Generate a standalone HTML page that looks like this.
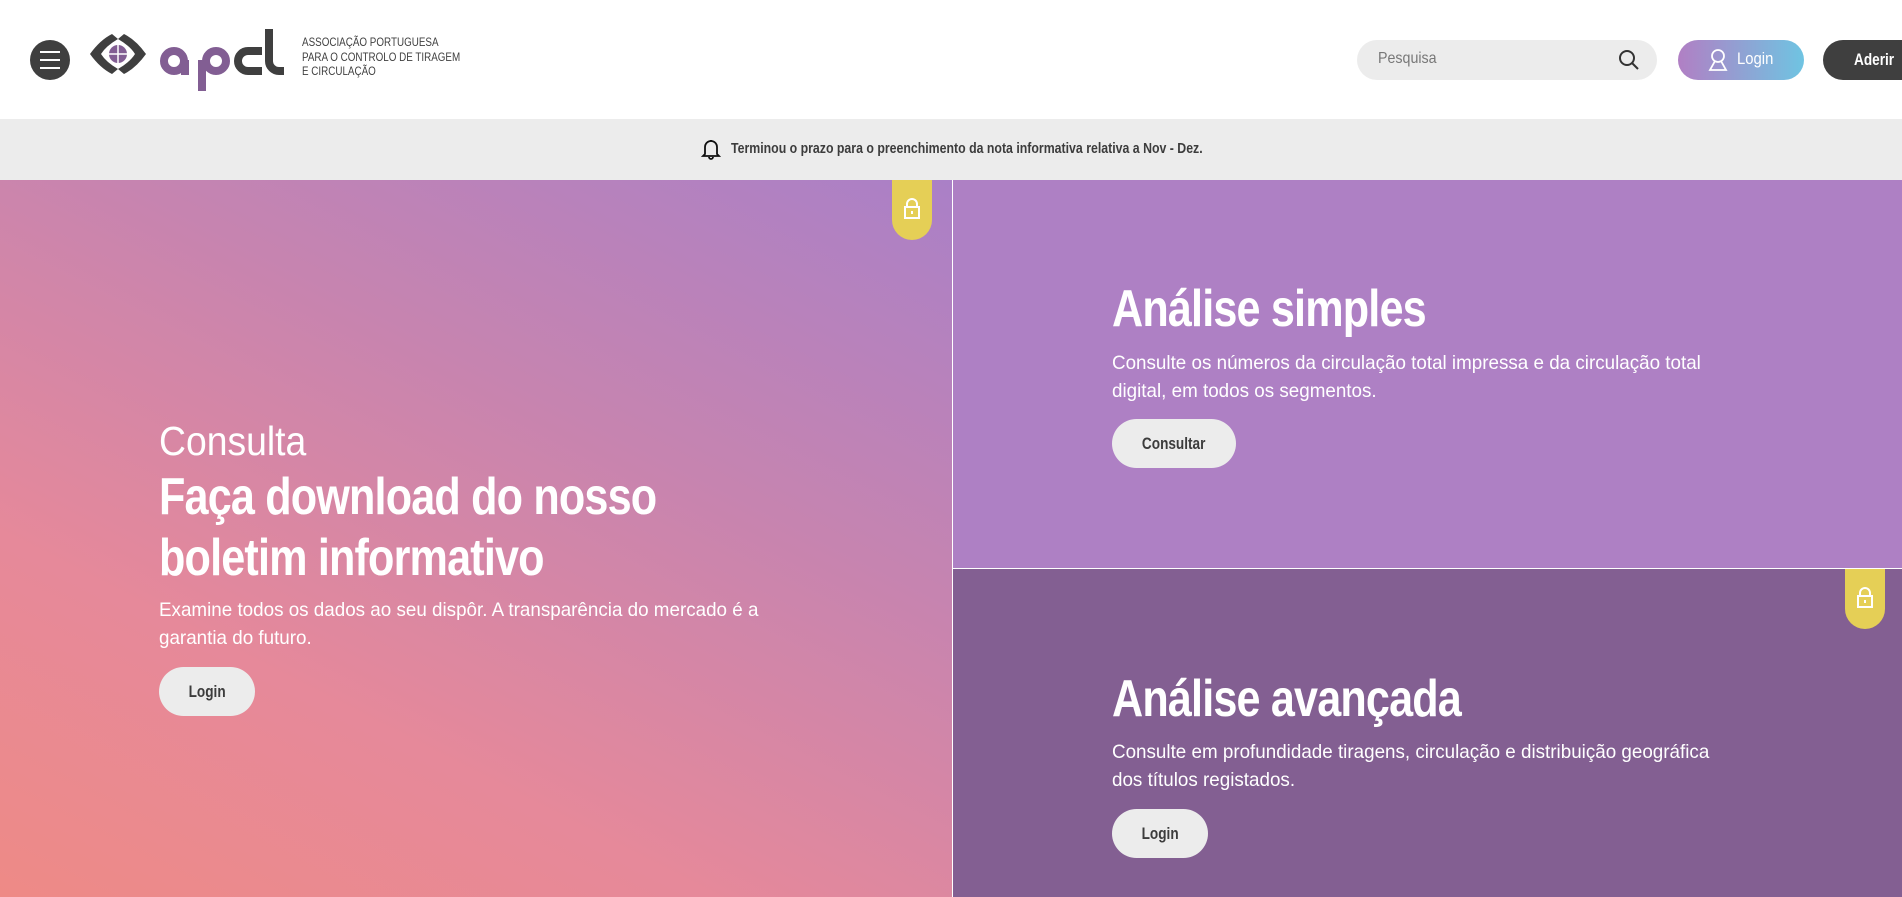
<!DOCTYPE html>
<html><head><meta charset="utf-8"><style>
*{margin:0;padding:0;box-sizing:border-box}
body{width:1902px;height:897px;overflow:hidden;font-family:"Liberation Sans",sans-serif;background:#fff;position:relative}
.abs{position:absolute;white-space:nowrap;transform-origin:0 0}
.btn{position:absolute;background:#ececec;color:#3c3c3c;border-radius:25px;font-weight:bold;font-size:17px;display:flex;align-items:center;justify-content:center}
.btn span{display:inline-block;transform:scaleX(0.8)}
.h1{color:#fff;font-weight:bold;font-size:52px;letter-spacing:-1px;line-height:61px;transform:scaleX(0.83)}
.p{color:#fff;font-size:19.5px;line-height:28px;transform:scaleX(0.965)}
.tab{position:absolute;width:40px;height:60px;background:#e5cf56;border-radius:0 0 20px 20px}
</style></head><body>
<!-- header -->
<div class="abs" style="left:30px;top:40px;width:40px;height:40px;border-radius:50%;background:#3f3f3f"></div>
<div class="abs" style="left:40px;top:51px;width:20px;height:2px;background:#fff;box-shadow:0 8px 0 #fff,0 16px 0 #fff"></div>
<svg class="abs" style="left:0;top:0" width="300" height="100" viewBox="0 0 300 100">
<path d="M90 54 Q100 40 112 34 L118 39 Q106 46 101 54 Q106 62 118 69 L112 74 Q100 68 90 54 Z" fill="#3f3f3f"/>
<path d="M146 54 Q136 40 124 34 L118 39 Q130 46 135 54 Q130 62 118 69 L124 74 Q136 68 146 54 Z" fill="#3f3f3f"/>
<circle cx="118" cy="54" r="9" fill="#825e93"/>
<path d="M118 45v18M109 54h18" stroke="#fff" stroke-width="1.5"/>
<g fill="none" stroke="#825e93" stroke-width="8">
<circle cx="174" cy="61" r="10"/><path d="M185 60 V75"/>
<circle cx="216" cy="61" r="10"/><path d="M202 60 V91"/>
</g>
<g fill="none" stroke="#3f3f3f" stroke-width="8">
<path d="M262 51 H248 a10 10 0 0 0 0 20 H262"/>
<path d="M269 29 V61 a10 10 0 0 0 10 10 H284"/>
</g>
</svg>
<div class="abs" style="left:302px;top:35px;font-size:12px;line-height:14.5px;color:#3f3f3f;transform:scaleX(0.82)">ASSOCIAÇÃO PORTUGUESA<br>PARA O CONTROLO DE TIRAGEM<br>E CIRCULAÇÃO</div>
<div class="abs" style="left:1357px;top:40px;width:300px;height:40px;border-radius:20px;background:#ececec"></div>
<div class="abs" style="left:1378px;top:50px;font-size:16px;color:#777;transform:scaleX(0.89)">Pesquisa</div>
<svg class="abs" style="left:1618px;top:49px" width="22" height="22" viewBox="0 0 22 22"><circle cx="9" cy="9" r="7" fill="none" stroke="#333" stroke-width="2"/><path d="M14 14l6 6" stroke="#333" stroke-width="2"/></svg>
<div class="abs" style="left:1678px;top:40px;width:126px;height:40px;border-radius:20px;background:linear-gradient(90deg,#b17fc4,#6fc4e2)"></div>
<svg class="abs" style="left:1707px;top:48px" width="22" height="24" viewBox="0 0 22 24"><circle cx="11" cy="8" r="6" fill="none" stroke="#fff" stroke-width="1.8"/><path d="M8 13 L3 22 H19 L14 13" fill="none" stroke="#fff" stroke-width="1.8"/></svg>
<div class="abs" style="left:1737px;top:50px;font-size:16.5px;color:#fff;transform:scaleX(0.9)">Login</div>
<div class="abs" style="left:1823px;top:40px;width:100px;height:40px;border-radius:20px;background:#3f3f3f"></div>
<div class="abs" style="left:1854px;top:50px;font-size:17px;font-weight:bold;color:#fff;transform:scaleX(0.8)">Aderir</div>
<!-- notice -->
<div class="abs" style="left:0;top:119px;width:1902px;height:61px;background:#ececec"></div>
<svg class="abs" style="left:701px;top:138px" width="20" height="22" viewBox="0 0 20 22"><path d="M4 16 V9 a6 6 0 0 1 12 0 V16 L18 18 H2 Z M8 19 a2 2 0 0 0 4 0" fill="none" stroke="#111" stroke-width="1.8"/><path d="M10 2v1" stroke="#111" stroke-width="2"/></svg>
<div class="abs" style="left:731px;top:141px;font-size:14.5px;color:#3c3c3c;font-weight:bold;transform:scaleX(0.85)">Terminou o prazo para o preenchimento da nota informativa relativa a Nov - Dez.</div>
<!-- panels -->
<div class="abs" style="left:0;top:180px;width:952px;height:717px;background:linear-gradient(27deg,#ee8a86 0%,#e6899a 30%,#c684b0 65%,#aa80c7 100%)"></div>
<div class="abs" style="left:953px;top:180px;width:949px;height:388px;background:#ae80c4"></div>
<div class="abs" style="left:953px;top:569px;width:949px;height:328px;background:#835f92"></div>
<div class="tab" style="left:892px;top:180px"></div>
<div class="tab" style="left:1845px;top:569px"></div>
<svg class="abs" style="left:902px;top:197px" width="20" height="24" viewBox="0 0 20 24"><path d="M5 10V7a5 5 0 0 1 10 0v3" fill="none" stroke="#fff" stroke-width="2"/><rect x="3" y="10" width="14" height="11" fill="none" stroke="#fff" stroke-width="2"/><path d="M10 14v3" stroke="#fff" stroke-width="2"/></svg>
<svg class="abs" style="left:1855px;top:586px" width="20" height="24" viewBox="0 0 20 24"><path d="M5 10V7a5 5 0 0 1 10 0v3" fill="none" stroke="#fff" stroke-width="2"/><rect x="3" y="10" width="14" height="11" fill="none" stroke="#fff" stroke-width="2"/><path d="M10 14v3" stroke="#fff" stroke-width="2"/></svg>
<div class="abs" style="left:159px;top:418px;font-size:41px;color:#fff;transform:scaleX(0.91)">Consulta</div>
<div class="abs h1" style="left:159px;top:467px">Faça download do nosso<br>boletim informativo</div>
<div class="abs p" style="left:159px;top:596px">Examine todos os dados ao seu dispôr. A transparência do mercado é a<br>garantia do futuro.</div>
<div class="btn" style="left:159px;top:667px;width:96px;height:49px"><span>Login</span></div>
<div class="abs h1" style="left:1112px;top:279px">Análise simples</div>
<div class="abs p" style="left:1112px;top:349px">Consulte os números da circulação total impressa e da circulação total<br>digital, em todos os segmentos.</div>
<div class="btn" style="left:1112px;top:419px;width:124px;height:49px"><span>Consultar</span></div>
<div class="abs h1" style="left:1112px;top:669px">Análise avançada</div>
<div class="abs p" style="left:1112px;top:738px">Consulte em profundidade tiragens, circulação e distribuição geográfica<br>dos títulos registados.</div>
<div class="btn" style="left:1112px;top:809px;width:96px;height:49px"><span>Login</span></div>
</body></html>
